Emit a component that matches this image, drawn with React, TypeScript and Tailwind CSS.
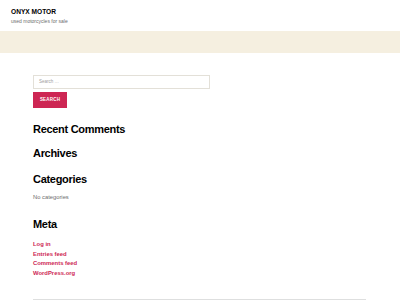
export default function App() {
  const links = ['Log in', 'Entries feed', 'Comments feed', 'WordPress.org'];
  return (
    <div className="w-[400px] h-[300px] overflow-hidden bg-white font-['Liberation_Sans',Arial,sans-serif] text-black">
      <header className="px-[11px] pt-[8px] h-[31px]">
        <div className="text-[6.6px] leading-[7px] font-bold">ONYX MOTOR</div>
        <div className="text-[5px] leading-[6px] mt-[3px] text-[#6d6d6d]">used motorcycles for sale</div>
      </header>
      <div className="h-[22px] bg-[#f5efe0]" />
      <main className="px-[33px] pt-[22px]">
        <div className="w-[177px] h-[14px] border border-[#e3e0d8] flex items-center px-[5px]">
          <span className="text-[4.5px] text-[#a0a0a0]">Search …</span>
        </div>
        <button className="mt-[3px] w-[34px] h-[16px] bg-[#cd2653] text-white text-[4.5px] font-bold tracking-[0.2px] flex items-center justify-center">
          SEARCH
        </button>
        <h2 className="mt-[14px] text-[11px] leading-[14px] font-bold tracking-[-0.3px]">Recent Comments</h2>
        <h2 className="mt-[10px] text-[11px] leading-[14px] font-bold tracking-[-0.3px]">Archives</h2>
        <h2 className="mt-[12px] text-[11px] leading-[14px] font-bold tracking-[-0.3px]">Categories</h2>
        <p className="mt-[8px] text-[5.8px] leading-[7px] text-[#6d6d6d]">No categories</p>
        <h2 className="mt-[16px] text-[11px] leading-[14px] font-bold tracking-[-0.3px]">Meta</h2>
        <ul className="mt-[10px] flex flex-col gap-[3.6px]">
          {links.map((l) => (
            <li key={l} className="text-[5.9px] leading-[6px] font-bold text-[#cd2653]">{l}</li>
          ))}
        </ul>
        <div className="mt-[23px] w-[333px] h-px bg-[#dedfdf]" />
      </main>
    </div>
  );
}
